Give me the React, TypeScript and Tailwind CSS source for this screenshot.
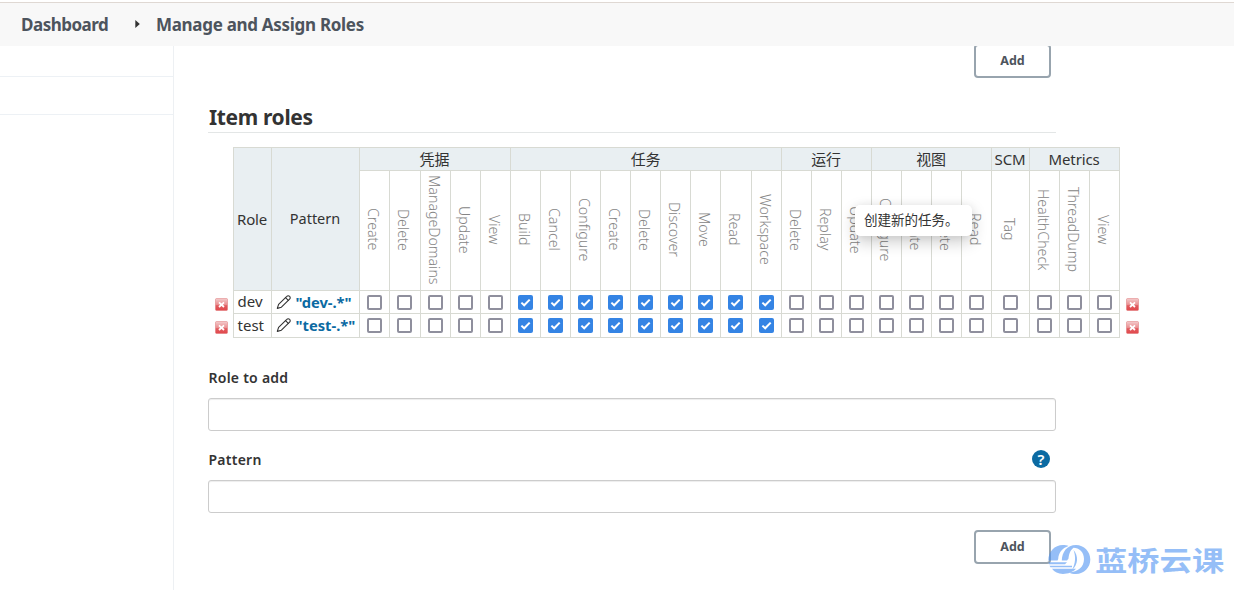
import React from 'react';

type Group = { name: string; permissions: string[] };

const groups: Group[] = [
  { name: '凭据', permissions: ['Create', 'Delete', 'ManageDomains', 'Update', 'View'] },
  {
    name: '任务',
    permissions: ['Build', 'Cancel', 'Configure', 'Create', 'Delete', 'Discover', 'Move', 'Read', 'Workspace'],
  },
  { name: '运行', permissions: ['Delete', 'Replay', 'Update'] },
  { name: '视图', permissions: ['Configure', 'Create', 'Delete', 'Read'] },
  { name: 'SCM', permissions: ['Tag'] },
  { name: 'Metrics', permissions: ['HealthCheck', 'ThreadDump', 'View'] },
];

const roles = [
  { name: 'dev', pattern: '"dev-.*"' },
  { name: 'test', pattern: '"test-.*"' },
];

const columnWidths = [
  20, 38, 88, 30, 31, 30, 30, 30, 30, 30, 30, 30, 30, 30, 30, 31, 30, 30, 30, 30, 30, 30, 30, 30, 38, 30, 30, 30, 22,
];

function DeleteIcon() {
  return (
    <svg width="13" height="13" viewBox="0 0 13 13" className="block">
      <defs>
        <linearGradient id="delete-fill" x1="0" y1="0" x2="0" y2="1">
          <stop offset="0" stopColor="#f3cccd" />
          <stop offset="0.5" stopColor="#ea9092" />
          <stop offset="0.6" stopColor="#e15c60" />
          <stop offset="1" stopColor="#e2474b" />
        </linearGradient>
      </defs>
      <rect x="0.5" y="0.5" width="12" height="12" rx="1" fill="url(#delete-fill)" stroke="#dc6a6c" strokeOpacity="0.45" />
      <path d="M4 4.4 9 9M9 4.4 4 9" stroke="#fff" strokeWidth="1.8" fill="none" />
    </svg>
  );
}

function PencilIcon() {
  return (
    <svg
      width="16"
      height="16"
      viewBox="0 0 16 16"
      fill="none"
      stroke="#333"
      strokeWidth="1.1"
      strokeLinejoin="round"
      strokeLinecap="round"
      className="shrink-0"
    >
      <path d="M1.3 14.4 2.6 10.4 10.8 2.3a1.9 1.9 0 0 1 2.8 0 1.9 1.9 0 0 1 0 2.8L5.4 13.2Z" />
      <path d="M9.5 3.6 12.3 6.4" />
    </svg>
  );
}

function Checkbox({ checked }: { checked: boolean }) {
  return checked ? (
    <span className="ml-[7.5px] flex h-[15px] w-[15px] items-center justify-center rounded-[2px] bg-[#3584e4]">
      <svg width="15" height="15" viewBox="0 0 15 15" fill="none" stroke="#fff" strokeWidth="2">
        <path d="M3.4 7.6 6.2 10.3 11.7 4.6" />
      </svg>
    </span>
  ) : (
    <span className="ml-[7.5px] block h-[15px] w-[15px] rounded-[2px] border-2 border-[#8f8f9d] bg-white" />
  );
}

function AddButton() {
  return (
    <button className="h-[34px] w-[77px] rounded-[4px] border-2 border-[#98a4ae] bg-white font-['Noto_Sans'] text-[12.5px] font-bold leading-none text-[#4d545d]">
      Add
    </button>
  );
}

function RoleTable() {
  return (
    <table className="ml-[5px] w-[928px] table-fixed border-collapse">
      <colgroup>
        {columnWidths.map((width, i) => (
          <col key={i} style={{ width }} />
        ))}
      </colgroup>
      <thead>
        <tr className="h-[23px]">
          <td rowSpan={2} />
          <th rowSpan={2} className="border border-[#d8dad3] bg-[#e9eff2] p-0 text-[15px] font-normal tracking-[-0.2px]">
            Role
          </th>
          <th rowSpan={2} className="border border-[#d8dad3] bg-[#e9eff2] p-0 text-[14.5px] font-normal">
            Pattern
          </th>
          {groups.map((group) => (
            <th
              key={group.name}
              colSpan={group.permissions.length}
              className="border border-[#d8dad3] bg-[#e9eff2] p-0 text-[15px] font-normal leading-[22px] tracking-[-0.1px]"
            >
              {group.name}
            </th>
          ))}
          <td rowSpan={2} />
        </tr>
        <tr className="h-[120px]">
          {groups.flatMap((group) =>
            group.permissions.map((permission) => (
              <th key={group.name + permission} className="border border-[#d8dad3] p-0 font-light text-[#858585]">
                <div className="flex h-[119px] items-center justify-center pb-[2px] pr-[3px]">
                  <span className="text-[14.2px] leading-[18px] [writing-mode:vertical-rl]">{permission}</span>
                </div>
              </th>
            )),
          )}
        </tr>
      </thead>
      <tbody>
        {roles.map((role, i) => (
          <tr key={role.name} className={i === 0 ? 'h-[23px]' : 'h-[24px]'}>
            <td className="p-0 pl-[2px] pt-[4px]">
              <DeleteIcon />
            </td>
            <td className="border border-[#d8dad3] p-0 pl-[4px] text-[15px] leading-[20px]">
              <div className="-mt-[2px] h-[20px]">{role.name}</div>
            </td>
            <td className="border border-[#d8dad3] p-0 pl-[4px]">
              <div className="-mt-[1px] flex h-[20px] items-center gap-[4px]">
                <PencilIcon />
                <a className="whitespace-nowrap text-[14.7px] font-bold leading-[20px] text-[#0b6aa2]">
                  {role.pattern}
                </a>
              </div>
            </td>
            {groups.flatMap((group) =>
              group.permissions.map((permission) => (
                <td key={group.name + permission} className="border border-[#d8dad3] p-0">
                  <div className={permission === 'Tag' ? 'pl-[4px]' : 'pl-0'}>
                    <Checkbox checked={group.name === '任务'} />
                  </div>
                </td>
              )),
            )}
            <td className="p-0 pl-[6px] pt-[4px]">
              <DeleteIcon />
            </td>
          </tr>
        ))}
      </tbody>
    </table>
  );
}

function Watermark() {
  return (
    <div className="absolute left-[1048px] top-[543px] flex items-center text-[#4f94f3] opacity-60">
      <svg width="43" height="32" viewBox="0 0 43 32" fill="currentColor" className="shrink-0">
        <path d="M0.3 17.600C0.300 8.500 6.500 2 15 2c2 0 4 .4 5.500 1C14 5 10.500 10 10.200 16L9.500 17.600Z" />
        <path d="M13.800 17.600C14 9 19 2 28 2 36 2 42.300 8.500 42.300 16.500S36 31 28 31c-3 0-5-.5-7-1.500C30 29 36 24 36 16 36 9 31 4.800 25.500 4.800 21.500 8 21 12 20.500 15.500L19 17.600Z" />
        <path d="M25.500 7c5 6 5 14-1.500 20 3.500-7 4-13 1.500-20Z" />
        <path d="M0.500 19.200H19l-2 2H1ZM1.500 22.800H24v1.500H2.500ZM4 25.800H28C25 29 20 31 15 31 10 31 6.500 29 4 25.800Z" />
      </svg>
      <span className="ml-[4px] origin-center scale-y-[0.84] whitespace-nowrap font-['Noto_Sans_CJK_SC'] text-[32.3px] font-bold leading-[32px]">
        蓝桥云课
      </span>
    </div>
  );
}

export default function App() {
  return (
    <div className="relative flex h-[590px] w-[1234px] flex-col overflow-hidden bg-white font-['Noto_Sans','Noto_Sans_CJK_SC',sans-serif] text-[#333]">
      <header className="flex h-[46px] shrink-0 items-center border-t-[2px] border-white bg-[#f8f8f8] pl-[21px] text-[17px] font-bold leading-none text-[#4d545d] shadow-[inset_0_1px_0_#dfd8d3]">
        <span className="w-[88px] whitespace-nowrap tracking-[-0.5px]">Dashboard</span>
        <svg width="5" height="8" viewBox="0 0 5 8" className="ml-[26px] mr-[16px]">
          <path d="M0.3 0 4.8 4 0.3 8Z" fill="#333" />
        </svg>
        <span className="whitespace-nowrap tracking-[-0.3px]">Manage and Assign Roles</span>
      </header>
      <div className="flex min-h-0 flex-1">
        <aside className="w-[174px] shrink-0 border-r border-[#edf0f3]">
          <div className="h-[31px] border-b border-[#edf1f5]" />
          <div className="h-[38px] border-b border-[#edf1f5]" />
        </aside>
        <main className="flex flex-1 flex-col overflow-hidden pl-[34px]">
          <div className="-mt-[2px] flex h-[34px] w-[843px] shrink-0 justify-end">
            <AddButton />
          </div>
          <h2 className="mt-[24px] h-[31px] w-[848px] shrink-0 border-b border-[#e3e6e6] pl-px text-[21px] font-bold leading-[30px] tracking-[-0.35px]">
            Item roles
          </h2>
          <div className="mt-[14px] h-[192px] shrink-0">
            <RoleTable />
          </div>
          <label className="mt-[29px] block h-[20px] shrink-0 pl-[0.5px] text-[14px] font-semibold leading-[20px] tracking-[0.25px]">
            Role to add
          </label>
          <input className="mt-[10px] h-[33px] w-[848px] shrink-0 rounded-[3px] border border-[#ccc] shadow-[inset_0_1px_1px_#00000013]" />
          <div className="mt-[18px] flex h-[22px] w-[848px] shrink-0 items-center justify-between pr-[6px]">
            <label className="pl-[0.5px] text-[14px] font-semibold leading-[20px] tracking-[0.25px]">Pattern</label>
            <span className="-mt-[2px] flex h-[18px] w-[18px] items-center justify-center rounded-full bg-[#0b6aa2] text-[15px] font-semibold leading-none text-white">
              ?
            </span>
          </div>
          <input className="mt-[9px] h-[33px] w-[848px] shrink-0 rounded-[3px] border border-[#ccc] shadow-[inset_0_1px_1px_#00000013]" />
          <div className="mt-[17px] flex w-[843px] shrink-0 justify-end">
            <AddButton />
          </div>
        </main>
      </div>
      <div className="absolute left-[855px] top-[205px] flex h-[31px] w-[117px] items-center whitespace-nowrap rounded-[5px] bg-white pl-[9px] text-[13.5px] shadow-[0_6px_16px_rgba(0,0,0,0.2),0_0_8px_rgba(0,0,0,0.06)]">
        创建新的任务。
      </div>
      <Watermark />
    </div>
  );
}
